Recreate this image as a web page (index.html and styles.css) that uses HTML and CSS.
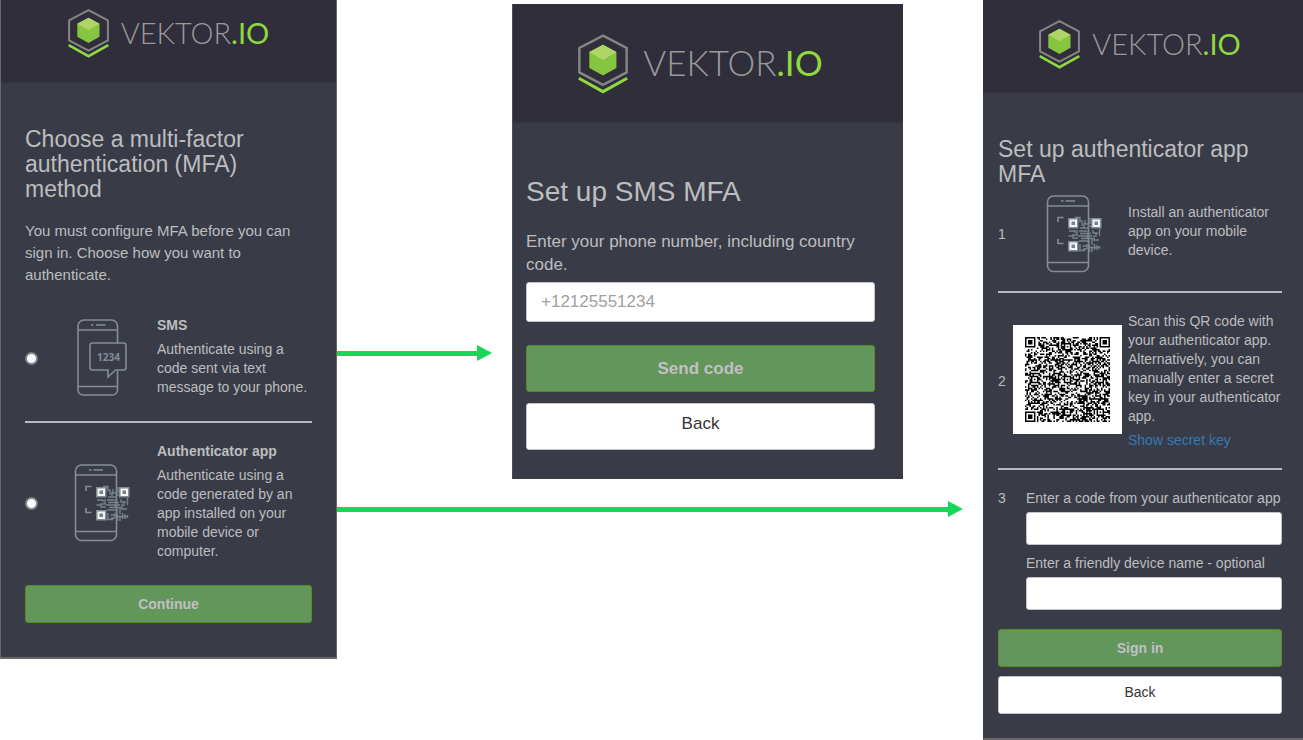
FILE: index.html
```html
<!DOCTYPE html>
<html lang="en">

<head>
    <meta charset="UTF-8">
    <meta name="viewport" content="width=device-width, initial-scale=1.0">
    <title>Vektor.io MFA setup</title>
    <link rel="stylesheet" href="styles.css">
</head>

<body>
    <!-- shared icons -->
    <svg class="sprite" aria-hidden="true">
        <symbol id="emblem" viewBox="0 0 41 49">
            <path d="M20.5 1.2 39.9 11.4V31.4L20.5 41.6 1.1 31.4V11.4Z" fill="none" stroke="#858585" stroke-width="2"/>
            <path d="M.7 36.2 20.5 47.2 40.3 36.2" fill="none" stroke="#8fd93f" stroke-width="2.5"/>
            <path d="M20.5 8.7 31.5 14.7V27.7L20.5 34 9.3 27.7V14.7Z" fill="#86c540"/>
            <path d="M20.5 8.7 31.5 14.7 20.5 21.3 9.3 14.7Z" fill="#b0d468"/>
        </symbol>
        <symbol id="phone-sms" viewBox="0 0 50 78">
            <g fill="none" stroke="#838d95" stroke-width="1.6">
                <path d="M40.5 24V7a6 6 0 0 0-6-6H7a6 6 0 0 0-6 6v64a5 5 0 0 0 5 5h29.5a5 5 0 0 0 5-5V52M1 11h39.5M1 67.5h39.5M14 6h2.5M19 6h9.5"/>
                <path d="M15.5 24h31a2.5 2.5 0 0 1 2.5 2.5v22a2.5 2.5 0 0 1-2.5 2.5H38.5l-7.5 7v-7H15.5a2.5 2.5 0 0 1-2.5-2.5v-22a2.5 2.5 0 0 1 2.5-2.5z"/>
            </g>
            <text x="31.5" y="41.5" class="bubble-text">1234</text>
        </symbol>
        <symbol id="phone-qr" viewBox="0 0 56 78">
            <g fill="none" stroke="#838d95" stroke-width="1.6">
                <rect x="1.5" y="1" width="41" height="75.5" rx="6"/>
                <path d="M1.5 11h41M1.5 67.5h41M15 6h2.5M19.5 6h9.5"/>
                <path d="M12 27v-4.500h5.5M12 44v4.500h5.5"/>
            </g>
            <g fill="none" stroke="#77828a" stroke-width="1.4">
                <path d="M29 22.5h5v5M36 25v6M38 28v5h5M34 33h4M39 25v4h3M42 31h12M44 23v6M47 35v3h5M53.5 34v7"/>
                <path d="M23 36h6v2M31 35v5h-4v3h5M22.5 41h5M33 36h8M34 38.5h11M32 41h9v3M35 43.5h12M33 46h10v3M42 36v5h4M48 40v5h5M50 38v4M46 44v6"/>
                <path d="M34 49v7M36.5 51h5M37 54h4M41 49v5M43.5 50v7M46 52v5M48.5 49v6M51 50v5M53.5 51v3M44 52.5h9M33 55.5h6"/>
            </g>
            <path d="M22 23h10.500v10.500H22zM45 23h10.500v10.500H45zM22 46h10.500v10.500H22z" fill="#838d95"/>
            <path d="M24.500 25.500h5.500v5.500h-5.500zM47.500 25.500h5.500v5.500h-5.500zM24.500 48.500h5.500v5.500h-5.500z" fill="#77828a" stroke="#f4f4f4" stroke-width="2"/>
        </symbol>
    </svg>

    <main class="flow">
        <form class="panel panel-method">
            <header class="brand">
                <svg class="emblem"><use href="#emblem"/></svg>
                <span class="wordmark">VEKTOR<b>.IO</b></span>
            </header>
            <div class="content">
                <h1>Choose a multi-factor authentication (MFA) method</h1>
                <p class="intro">You must configure MFA before you can sign in. Choose how you want to authenticate.</p>

                <label class="option">
                    <input type="radio" name="method" value="sms">
                    <svg class="icon-sms"><use href="#phone-sms"/></svg>
                    <span class="option-text">
                        <strong>SMS</strong>
                        <span>Authenticate using a code sent via text message to your phone.</span>
                    </span>
                </label>
                <hr>
                <label class="option">
                    <input type="radio" name="method" value="app">
                    <svg class="icon-app"><use href="#phone-qr"/></svg>
                    <span class="option-text">
                        <strong>Authenticator app</strong>
                        <span>Authenticate using a code generated by an app installed on your mobile device or computer.</span>
                    </span>
                </label>

                <button type="button" class="btn btn-primary">Continue</button>
            </div>
        </form>

        <div class="arrow arrow-sms"></div>

        <form class="panel panel-sms">
            <header class="brand">
                <svg class="emblem"><use href="#emblem"/></svg>
                <span class="wordmark">VEKTOR<b>.IO</b></span>
            </header>
            <div class="content">
                <h1>Set up SMS MFA</h1>
                <label for="phone">Enter your phone number, including country code.</label>
                <input type="text" id="phone" placeholder="+12125551234">
                <button type="button" class="btn btn-primary">Send code</button>
                <button type="button" class="btn btn-back">Back</button>
            </div>
        </form>

        <div class="arrow arrow-app"></div>

        <form class="panel panel-app">
            <header class="brand">
                <svg class="emblem"><use href="#emblem"/></svg>
                <span class="wordmark">VEKTOR<b>.IO</b></span>
            </header>
            <div class="content">
                <h1>Set up authenticator app MFA</h1>
                <div class="step step-install">
                    <span>1</span>
                    <svg class="icon-app"><use href="#phone-qr"/></svg>
                    <p>Install an authenticator app on your mobile device.</p>
                </div>
                <hr>
                <div class="step step-scan">
                    <span>2</span>
                    <svg class="qr" viewBox="0 0 57 57" role="img" aria-label="QR code"><path id="qrModules"/></svg>
                    <div>
                        <p>Scan this QR code with your authenticator app. Alternatively, you can manually enter a secret key in your authenticator app.</p>
                        <a href="#">Show secret key</a>
                    </div>
                </div>
                <hr>
                <div class="step-code">
                    <span>3</span>
                    <div class="fields">
                        <label for="code">Enter a code from your authenticator app</label>
                        <input type="text" id="code">
                        <label for="device">Enter a friendly device name - optional</label>
                        <input type="text" id="device">
                    </div>
                </div>
                <button type="button" class="btn btn-primary">Sign in</button>
                <button type="button" class="btn btn-back">Back</button>
            </div>
        </form>
    </main>

    <script>
        const size = 57;
        const grid = [];
        let seed = 20177;

        function nextBit() {
            seed = (seed * 1103515245 + 12345) % 2147483648;
            return seed / 2147483648 < 0.5;
        }

        for (let y = 0; y < size; y++) {
            grid.push([]);
            for (let x = 0; x < size; x++) {
                grid[y].push(nextBit());
            }
        }

        // concentric squares: finders have radius 3 (plus a quiet ring), alignment marks radius 2
        function drawMark(cx, cy, radius, light) {
            for (let y = cy - 4; y <= cy + 4; y++) {
                for (let x = cx - 4; x <= cx + 4; x++) {
                    const d = Math.max(Math.abs(x - cx), Math.abs(y - cy));
                    if (d > radius + (radius === 3 ? 1 : 0)) continue;
                    if (x < 0 || y < 0 || x >= size || y >= size) continue;
                    grid[y][x] = !light.includes(d);
                }
            }
        }

        for (const [x, y] of [[28, 6], [6, 28], [28, 28], [50, 28], [28, 50], [50, 50]]) {
            drawMark(x, y, 2, [1]);
        }
        for (const [x, y] of [[3, 3], [53, 3], [3, 53]]) {
            drawMark(x, y, 3, [2, 4]);
        }

        let d = '';
        for (let y = 0; y < size; y++) {
            for (let x = 0; x < size; x++) {
                if (grid[y][x]) d += `M${x} ${y}h1v1h-1z`;
            }
        }
        document.getElementById('qrModules').setAttribute('d', d);
    </script>
</body>

</html>
```

FILE: styles.css
```css
* {
    box-sizing: border-box;
}

body {
    margin: 0;
    background-color: white;
    color: #bdbdbf;
    font-family: "Liberation Sans", Arial, sans-serif;
    font-size: 14px;
    line-height: 19px;
}

h1, p {
    margin: 0;
}

h1 {
    font-size: 23px;
    font-weight: normal;
    line-height: 25px;
}

hr {
    width: 100%;
    height: 2px;
    margin: 0;
    border: none;
    background-color: #b3bcc2;
}

.sprite {
    display: none;
}

.flow {
    display: grid;
    grid-template-columns: minmax(0, 337fr) minmax(0, 175fr) minmax(0, 391fr) minmax(0, 80fr) minmax(0, 320fr);
    grid-template-rows: auto 1fr;
    align-items: start;
}

/* panels */
.panel {
    background-color: #393c47;
}

.panel-method {
    grid-area: 1 / 1 / 3 / 2;
    border: solid #686868;
    border-width: 0 1px 2px;
}

.panel-sms {
    grid-area: 1 / 3 / 2 / 4;
    margin-top: 4px;
    border-left: 1px solid #4b4f57;
}

.panel-app {
    grid-area: 1 / 5 / 3 / 6;
    border-bottom: 2px solid #686868;
}

.content {
    display: flex;
    flex-direction: column;
}

.panel-method .content {
    padding: 44px 24px 34px;
}

.panel-sms .content {
    padding: 54px 28px 29px 13px;
}

.panel-app .content {
    padding: 44px 21px 24px 15px;
}

/* brand bar */
.brand {
    display: flex;
    justify-content: center;
    gap: 12px;
    background-color: #2f2e3a;
    border-bottom: 1px solid #34353f;
}

.panel-method .brand {
    height: 83px;
    padding-top: 9px;
}

.panel-sms .brand {
    height: 119px;
    padding: 30px 28px 0 13px;
    gap: 15px;
}

.panel-app .brand {
    height: 93px;
    padding: 20px 21px 0 15px;
}

.emblem {
    flex: none;
    width: 41px;
    height: 49px;
}

.wordmark {
    color: #9a9a9a;
    font-family: Lato, sans-serif;
    font-size: 29px;
    font-weight: 300;
    line-height: 47px;
}

.wordmark b {
    color: #8fd93f;
    font-weight: 400;
}

.panel-sms .emblem {
    width: 50px;
    height: 60px;
}

.panel-sms .wordmark {
    font-size: 35px;
    line-height: 57px;
}

/* method options */
.intro {
    margin: 18px 0 30px;
    font-size: 15px;
    line-height: 22px;
}

.option {
    display: grid;
    grid-template-columns: 22px 110px 1fr;
    align-items: center;
}

.option svg {
    justify-self: center;
}

.option + hr {
    margin: 24px 0 19px;
}

.option input {
    appearance: none;
    width: 13px;
    height: 13px;
    margin: 3px 0 0;
    border: 2px solid #85828e;
    border-radius: 50%;
    background-color: white;
}

.option input:checked {
    background-color: #62965b;
}

.option svg {
    margin-top: 3px;
}

.option-text strong,
.option-text span {
    display: block;
}

.option-text strong {
    margin-bottom: 5px;
}

.icon-sms {
    width: 50px;
    height: 78px;
}

.icon-app {
    width: 56px;
    height: 78px;
}

.bubble-text {
    fill: #838d95;
    font: bold 10px "Open Sans", sans-serif;
    text-anchor: middle;
}

.panel-method .btn {
    margin-top: 24px;
}

/* controls */
.btn {
    height: 38px;
    padding: 0;
    border: 1px solid #5a8a26;
    border-radius: 3px;
    font: inherit;
    cursor: pointer;
}

.btn-primary {
    background-color: #62965b;
    color: #c3bfc6;
    font-weight: bold;
}

.btn-back {
    margin-top: 9px;
    padding-bottom: 5px;
    border-color: #c4c4c8;
    background-color: white;
    color: #333333;
}

input[type="text"] {
    width: 100%;
    height: 33px;
    padding: 0 14px;
    border: 1px solid #c4c4c8;
    border-radius: 3px;
    background-color: white;
    color: #333333;
    font: inherit;
}

input[type="text"]::placeholder {
    color: #a0a0a0;
}

.panel-sms {
    font-size: 17px;
    line-height: 23px;
}

.panel-sms h1 {
    margin-bottom: 23px;
    font-size: 28px;
    line-height: 30px;
}

.panel-sms input {
    height: 40px;
    margin: 6px 0 23px;
}

.panel-sms .btn {
    height: 47px;
}

.panel-sms .btn-back {
    margin-top: 11px;
    padding-bottom: 7px;
}

/* authenticator steps */
.step {
    display: grid;
    grid-template-columns: 15px 115px 1fr;
    align-items: center;
}

.step-install {
    padding: 8px 0 18px;
}

.step-install .icon-app {
    margin-left: 33px;
}

.step-install p {
    margin-bottom: 6px;
}

.step-scan {
    padding: 19px 0 18px;
}

.step-scan p {
    margin-bottom: 5px;
}

.step-scan a {
    display: block;
    color: #337ab7;
    text-decoration: none;
}

.qr {
    width: 109px;
    height: 109px;
    margin-bottom: 3px;
    padding: 12px;
    background-color: white;
}

.step-code {
    display: grid;
    grid-template-columns: 28px 1fr;
    padding: 19px 0;
}

.fields label {
    display: block;
    margin-bottom: 4px;
}

.fields input + label {
    margin-top: 9px;
}

/* arrows between panels */
.arrow {
    display: flex;
    align-items: center;
    margin-right: 20px;
}

.arrow::before {
    content: "";
    flex: 1;
    height: 5px;
    background-color: #16d858;
}

.arrow::after {
    content: "";
    border: solid transparent;
    border-width: 8px 0 8px 15px;
    border-left-color: #16d858;
}

.arrow-sms {
    grid-area: 1 / 2 / 2 / 3;
    margin-top: 345px;
}

.arrow-app {
    grid-area: 2 / 2 / 3 / 5;
    margin-top: 22px;
}
```
